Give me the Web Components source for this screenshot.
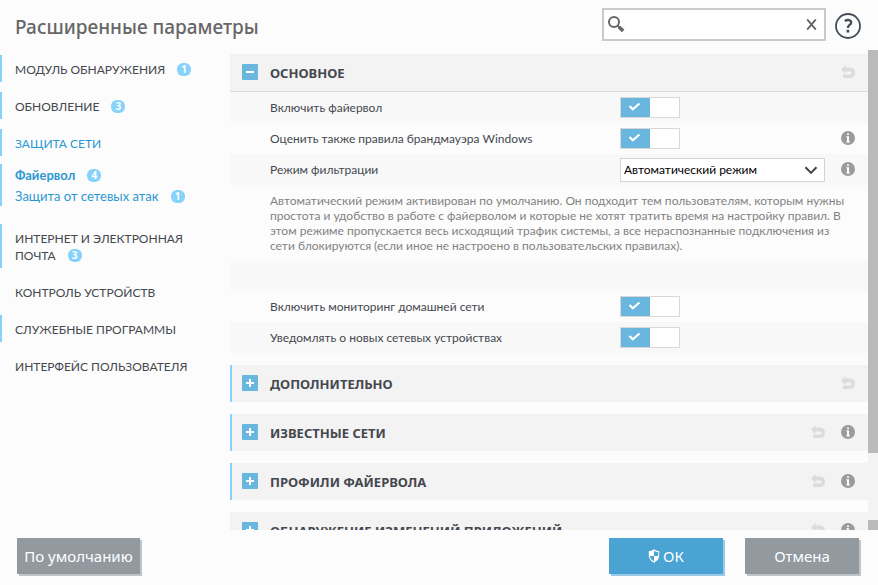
<!DOCTYPE html>
<html lang="ru">
<head>
<meta charset="utf-8">
<title>Расширенные параметры</title>
<style>
html, body { height: 100%; }
body {
  margin: 0; background: #fcfcfc; color: #45484f;
  font: 12px/15px Lato, "Open Sans", "Noto Sans", sans-serif;
  --accent: #69b6de; --mark: #86d2fa; --link: #2b98d2;
}
</style>
</head>
<body>
<settings-window>
  <window-header slot="header">Расширенные параметры</window-header>

  <nav-item slot="nav" marked badge="1">МОДУЛЬ ОБНАРУЖЕНИЯ</nav-item>
  <nav-item slot="nav" marked badge="3">ОБНОВЛЕНИЕ</nav-item>
  <nav-item slot="nav" marked active>ЗАЩИТА СЕТИ</nav-item>
  <nav-group slot="nav">
    <nav-item sub active current badge="4">Файервол</nav-item>
    <nav-item sub active badge="1">Защита от сетевых атак</nav-item>
  </nav-group>
  <nav-item slot="nav" marked badge="3">ИНТЕРНЕТ И ЭЛЕКТРОННАЯ ПОЧТА</nav-item>
  <nav-item slot="nav">КОНТРОЛЬ УСТРОЙСТВ</nav-item>
  <nav-item slot="nav" marked>СЛУЖЕБНЫЕ ПРОГРАММЫ</nav-item>
  <nav-item slot="nav">ИНТЕРФЕЙС ПОЛЬЗОВАТЕЛЯ</nav-item>

  <settings-section open undo heading="ОСНОВНОЕ">
    <toggle-row shaded label="Включить файервол"></toggle-row>
    <toggle-row info label="Оценить также правила брандмауэра Windows"></toggle-row>
    <select-row shaded info label="Режим фильтрации" options="Автоматический режим"></select-row>
    <note-row>Автоматический режим активирован по умолчанию. Он подходит тем пользователям, которым нужны простота и удобство в работе с файерволом и которые не хотят тратить время на настройку правил. В этом режиме пропускается весь исходящий трафик системы, а все нераспознанные подключения из сети блокируются (если иное не настроено в пользовательских правилах).</note-row>
    <empty-row></empty-row>
    <toggle-row label="Включить мониторинг домашней сети"></toggle-row>
    <toggle-row shaded label="Уведомлять о новых сетевых устройствах"></toggle-row>
  </settings-section>
  <settings-section marked undo heading="ДОПОЛНИТЕЛЬНО"></settings-section>
  <settings-section marked undo info heading="ИЗВЕСТНЫЕ СЕТИ"></settings-section>
  <settings-section marked undo info heading="ПРОФИЛИ ФАЙЕРВОЛА"></settings-section>
  <settings-section undo info heading="ОБНАРУЖЕНИЕ ИЗМЕНЕНИЙ ПРИЛОЖЕНИЙ"></settings-section>

  <action-button slot="left" wide>По умолчанию</action-button>
  <action-button slot="right" primary>ОК</action-button>
  <action-button slot="right">Отмена</action-button>
</settings-window>

<script>
const UNDO = `<svg viewBox="0 0 14 14"><path d="M0 4.500 4.500 0v2.500H9c3.200 0 5 2.200 5 5.200S12.200 13 9 13H2V9.400h7c1 0 1.500-.6 1.500-1.500S10 6.400 9 6.400H4.500V9z" fill="#dcdcdc"/></svg>`;
const INFO = `<svg viewBox="0 0 14 14"><circle cx="7" cy="7" r="7" fill="#9b9b9b"/><path d="M6 2.500h2v1.600H6zM5.300 5.300H8v5.100h1v1H5.200v-1H6V6.300h-.7z" fill="#fff"/></svg>`;
const SHIELD = `<svg viewBox="0 0 12 14" width="12" height="14"><path d="M6 .3C4.500 1.400 2.800 2 .8 2.100v4.700c0 3 2 5.300 5.200 6.900 3.200-1.600 5.200-3.900 5.200-6.900V2.100C9.200 2 7.500 1.400 6 .3z" fill="#fff"/><path d="M6 2v5h4.200V3.300C8.600 3.100 7.200 2.700 6 2zM6 7H1.900C2.100 9.300 3.600 11 6 12.300z" fill="#4aa3d3"/></svg>`;
const ICON_BTN = `
  .icon { width: 14px; height: 14px; margin: 0 0 1px; padding: 0; border: 0; background: none; display: block; flex: none; cursor: pointer; }
  .icon svg { width: 14px; height: 14px; display: block; }`;
const ROW = `
  :host { display: flex; align-items: center; box-sizing: border-box; min-height: 31px; padding: 0 13px 0 40px; }
  :host([shaded]) { background: #f8f8f8; }
  label { flex: 0 0 350px; }
  .space { flex: 1; }` + ICON_BTN;

function define(name, render) {
  customElements.define(name, class extends HTMLElement {
    constructor() { super(); this.attachShadow({ mode: 'open' }); }
    connectedCallback() { this.shadowRoot.innerHTML = render(this); }
  });
}
const infoButton = el => el.hasAttribute('info') ? `<button class="icon" aria-label="Справка">${INFO}</button>` : '';
const undoButton = el => el.hasAttribute('undo') ? `<button class="icon" aria-label="Восстановить">${UNDO}</button>` : '';

define('settings-window', () => `
  <style>
    :host { display: grid; grid-template: 50px minmax(0, 1fr) 55px / 230px minmax(0, 1fr); height: 100vh; }
    header { grid-column: 1 / -1; }
    nav { padding-top: 5px; display: flex; flex-direction: column; gap: 10px; overflow: hidden; }
    main { display: flex; min-height: 0; }
    .content { flex: 1; overflow: hidden; padding-top: 4px; display: flex; flex-direction: column; gap: 12px; }
    .bar { flex: none; width: 10px; background: #f3f3f3; display: flex; flex-direction: column; justify-content: space-between; }
    .thumb { height: 84%; background: #bababa; }
    .end { height: 10px; background: #bababa; }
    footer { grid-column: 1 / -1; display: flex; justify-content: space-between; align-items: flex-start; padding: 8px 19px 0 17px; }
    .group { display: flex; gap: 22px; }
  </style>
  <header><slot name="header"></slot></header>
  <nav><slot name="nav"></slot></nav>
  <main><div class="content"><slot></slot></div><div class="bar"><div class="thumb"></div><div class="end"></div></div></main>
  <footer><div class="group"><slot name="left"></slot></div><div class="group"><slot name="right"></slot></div></footer>`);

define('window-header', () => `
  <style>
    :host { display: flex; align-items: flex-start; padding: 8px 17px 0 15px; }
    h1 { flex: 1; margin: 6px 0 0; font: 500 19px/26px "Noto Sans", "Open Sans", sans-serif; color: #666; }
    .search { display: flex; align-items: center; box-sizing: border-box; width: 224px; height: 33px; border: 2px solid #cacaca; background: #fff; padding: 0 7px 0 4px; }
    input { flex: 1; min-width: 0; border: 0; outline: 0; background: none; font: inherit; padding: 0 4px; }
    button { border: 0; padding: 0; background: none; display: block; cursor: pointer; }
    svg { display: block; }
    .help { margin: 5px 0 0 9px; }
  </style>
  <h1><slot></slot></h1>
  <div class="search">
    <svg width="17" height="17" viewBox="0 0 17 17" fill="none" stroke="#666"><circle cx="6" cy="6" r="5" stroke-width="2"/><path d="M9.500 9.500l2 2" stroke-width="2"/><path d="M11 11l4.200 4" stroke-width="3.600"/></svg>
    <input type="text" aria-label="Поиск">
    <button aria-label="Очистить"><svg width="11" height="11" viewBox="0 0 11 11"><path d="M1.200.5l8.600 10M9.800.5l-8.600 10" stroke="#606060" stroke-width="1.900"/></svg></button>
  </div>
  <button class="help" aria-label="Справка"><svg width="26" height="26" viewBox="0 0 26 26" fill="none" stroke="#434c58"><circle cx="13" cy="13" r="12" stroke-width="1.800"/><path d="M9.800 8c3-1.800 6.400-1.100 6.400 1.500 0 2.600-3.300 2.400-3.300 5.500" stroke-width="2.300"/><path d="M12.900 16.800v2.700" stroke-width="2.700"/></svg></button>`);

define('nav-group', () => `
  <style>:host { display: flex; flex-direction: column; border-left: 2px solid var(--mark); margin: -2px 0 8px; }</style>
  <slot></slot>`);

define('nav-item', el => `
  <style>
    :host { display: block; box-sizing: border-box; padding: 6px 28px 4px 13px; border-left: 2px solid transparent; }
    :host([marked]) { border-color: var(--mark); }
    :host([sub]) { border: 0; padding: 3px 28px 1px 13px; font-size: 13px; }
    :host([current]) { font-weight: 700; }
    a { color: inherit; text-decoration: none; line-height: 17px; display: block; }
    :host([active]) a { color: var(--link); }
    .badge { display: inline-block; width: 14px; height: 13px; border-radius: 6px; margin-left: 12px; background: var(--mark); color: #fff; font: 700 10px/13px "Noto Sans", sans-serif; text-align: center; vertical-align: 1px; }
  </style>
  <a href="#"><slot></slot>${el.hasAttribute('badge') ? `<span class="badge">${el.getAttribute('badge')}</span>` : ''}</a>`);

define('settings-section', el => {
  const open = el.hasAttribute('open');
  return `
  <style>
    :host { display: block; flex: none; }
    .head { display: flex; align-items: center; box-sizing: border-box; height: 37px; background: #f3f3f3; padding: 0 13px 0 10px; border-left: 2px solid transparent; }
    :host([marked]) .head { border-left-color: var(--mark); }
    :host([open]) .head { height: 38px; border-bottom: 1px solid #dadada; border-left: 0; padding-left: 12px; }
    .fold { width: 16px; height: 16px; margin: 0 0 1px; padding: 0; border: 0; border-radius: 1px; background: var(--accent); flex: none; cursor: pointer; }
    .fold svg { display: block; }
    h2 { flex: 1; margin: 0 0 0 12px; font: 700 13px/18px "Noto Sans", "Open Sans", sans-serif; }
    .tools { display: flex; gap: 16px; }
    ${ICON_BTN}
  </style>
  <div class="head">
    <button class="fold" aria-expanded="${open}" aria-label="${el.getAttribute('heading')}"><svg width="16" height="16"><path d="${open ? 'M4 8h8' : 'M4 8h8M8 4v8'}" stroke="#fff" stroke-width="2"/></svg></button>
    <h2>${el.getAttribute('heading')}</h2>
    <div class="tools">${undoButton(el)}${infoButton(el)}</div>
  </div>
  <slot></slot>`;
});

define('toggle-row', el => `
  <style>${ROW}
    .switch { position: relative; display: block; width: 60px; height: 21px; }
    input { appearance: none; box-sizing: border-box; display: block; margin: 0; width: 60px; height: 21px; border: 1px solid #d8d8d8; background: #fff; }
    input:checked { background: linear-gradient(90deg, var(--accent) 50%, #fff 50%); }
    .switch svg { position: absolute; left: 8px; top: 5px; pointer-events: none; }
  </style>
  <label for="c">${el.getAttribute('label')}</label>
  <span class="switch"><input id="c" type="checkbox" checked><svg width="13" height="10" viewBox="0 0 13 10"><path d="M1.500 4l3.300 3.300L11.500 1.500" fill="none" stroke="#fff" stroke-width="2.200"/></svg></span>
  <span class="space"></span>${infoButton(el)}`);

define('select-row', el => `
  <style>${ROW}
    .box { position: relative; width: 205px; }
    select { appearance: none; display: block; box-sizing: border-box; width: 100%; height: 24px; border: 1px solid #d4d4d4; border-radius: 0; background: #fff; color: #000; font: inherit; padding: 0 24px 0 3px; }
    .box svg { position: absolute; right: 7px; top: 8px; pointer-events: none; }
  </style>
  <label for="s">${el.getAttribute('label')}</label>
  <span class="box"><select id="s">${el.getAttribute('options').split('|').map(o => `<option>${o}</option>`).join('')}</select><svg width="14" height="9" viewBox="0 0 14 9"><path d="M1.500 1.200L7 6.900l5.500-5.700" fill="none" stroke="#444" stroke-width="2"/></svg></span>
  <span class="space"></span>${infoButton(el)}`);

define('note-row', () => `
  <style>:host { display: block; padding: 8px 18px 8px 40px; color: #828282; } p { margin: 0; }</style>
  <p><slot></slot></p>`);

define('empty-row', () => `<style>:host { display: block; height: 30px; background: #f8f8f8; }</style>`);

define('action-button', el => `
  <style>
    :host { display: block; }
    button { display: flex; align-items: center; justify-content: center; gap: 3px; min-width: 114px; height: 36px; padding: 0 9px; border: 0; background: #92999f; box-shadow: 2px 2px 0 #bfc4c9; color: #fff; font: 15px/20px "Noto Sans", "Open Sans", sans-serif; cursor: pointer; }
    :host([primary]) button { background: #4aa3d3; box-shadow: 2px 2px 0 #97cae6; }
    :host([wide]) button { min-width: 123px; padding: 0 7px; }
  </style>
  <button>${el.hasAttribute('primary') ? SHIELD : ''}<slot></slot></button>`);
</script>
</body>
</html>
